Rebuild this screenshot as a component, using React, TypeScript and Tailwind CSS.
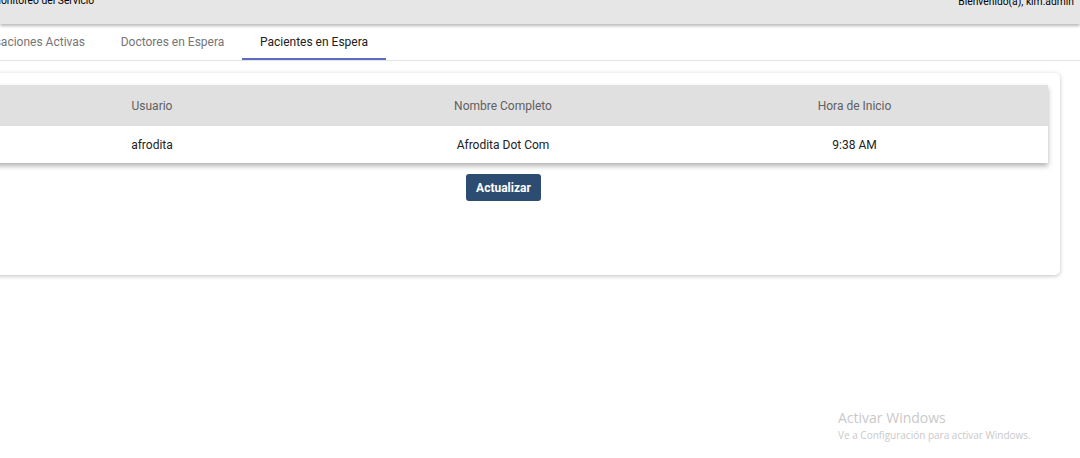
export default function App() {
  return (
    <div className="relative w-[1080px] h-[458px] overflow-hidden bg-white font-['Roboto',sans-serif]">
      {/* barra superior */}
      <header className="relative z-10 flex h-[24px] items-start justify-between bg-[#e6e6e6] shadow-[0_2px_3px_rgba(0,0,0,0.28)] text-[10.3px] leading-[14px] text-black">
        <span className="-ml-[8px] -mt-[6px] whitespace-nowrap">Monitoreo del Servicio</span>
        <span className="mr-[6px] -mt-[5px] whitespace-nowrap">Bienvenido(a), kim.admin</span>
      </header>

      {/* tabs */}
      <nav className="flex h-[37px] border-b border-[#e3e3e3] text-[12px]">
        <div className="flex w-[103px] items-center justify-end overflow-hidden pr-[18px] text-[#757575]">
          <span className="whitespace-nowrap">Conversaciones Activas</span>
        </div>
        <div className="flex w-[139px] items-center justify-center text-[#757575]">
          <span className="whitespace-nowrap">Doctores en Espera</span>
        </div>
        <div className="flex w-[144px] items-center justify-center border-b-2 border-[#5c6bc0] pt-[2px] text-[#212121]">
          <span className="whitespace-nowrap">Pacientes en Espera</span>
        </div>
      </nav>

      {/* tarjeta */}
      <section className="-ml-[53px] mr-[20px] mt-[12px] h-[202px] rounded-[5px] bg-white p-[12px] shadow-[0_1px_4px_rgba(0,0,0,0.25)]">
        <div className="shadow-[0_3px_5px_rgba(0,0,0,0.3)] text-[12px]">
          <div className="grid h-[41px] grid-cols-[386px_316px_1fr] items-center bg-[#e0e0e0] text-[#616161]">
            <span className="text-center">Usuario</span>
            <span className="text-center">Nombre Completo</span>
            <span className="text-center">Hora de Inicio</span>
          </div>
          <div className="grid h-[37px] grid-cols-[386px_316px_1fr] items-center bg-white text-[#212121]">
            <span className="text-center">afrodita</span>
            <span className="text-center">Afrodita Dot Com</span>
            <span className="text-center">9:38 AM</span>
          </div>
        </div>
        <div className="mt-[11px] flex justify-center">
          <button className="h-[27px] w-[75px] rounded-[3px] bg-[#2c4d71] text-[12px] font-bold text-white">
            Actualizar
          </button>
        </div>
      </section>

      {/* marca de agua de Windows */}
      <div className="absolute left-[838px] top-[409px] font-['Open_Sans',sans-serif] text-[#c9c9c9]">
        <div className="text-[14px] leading-[18px]">Activar Windows</div>
        <div className="text-[10px] leading-[16px]">Ve a Configuración para activar Windows.</div>
      </div>
    </div>
  );
}
